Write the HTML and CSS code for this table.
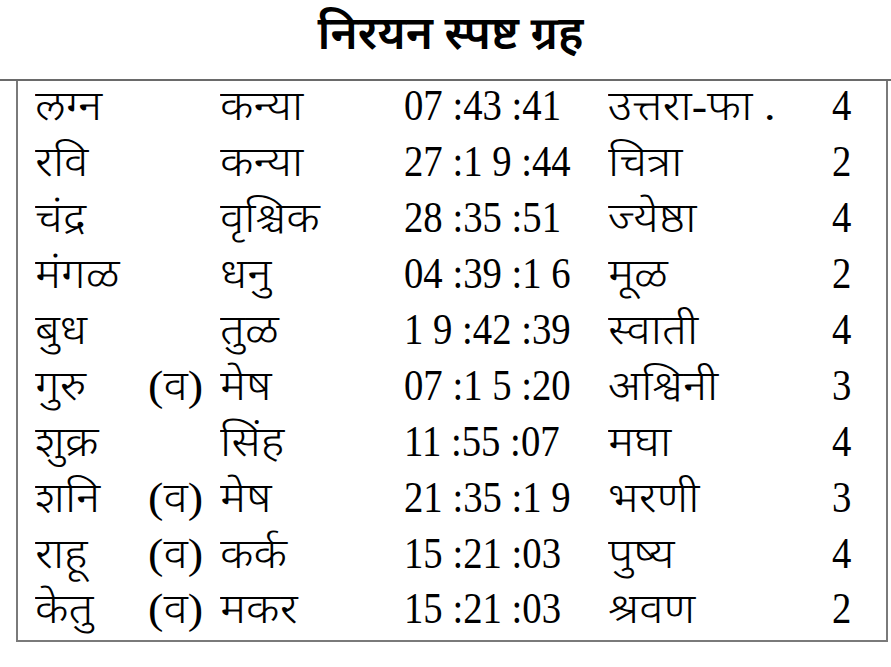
FILE: index.html
```html
<!DOCTYPE html>
<html lang="mr">
<head>
<meta charset="utf-8">
<link rel="stylesheet" href="styles.css">
<title>निरयन स्पष्ट ग्रह</title>
</head>
<body>
<h1 class="title">निरयन स्पष्ट ग्रह</h1>
<div class="frame">
  <div class="box">
    <div class="row"><span class="c"><span class="dv">लग्न</span></span><span class="c"></span><span class="c"><span class="dv">कन्या</span></span><span class="c num">07 :43 :41</span><span class="c"><span class="dv">उत्तरा-फा .</span></span><span class="c num">4</span></div>
    <div class="row"><span class="c"><span class="dv">रवि</span></span><span class="c"></span><span class="c"><span class="dv">कन्या</span></span><span class="c num">27 :1 9 :44</span><span class="c"><span class="dv">चित्रा</span></span><span class="c num">2</span></div>
    <div class="row"><span class="c"><span class="dv">चंद्र</span></span><span class="c"></span><span class="c"><span class="dv">वृश्चिक</span></span><span class="c num">28 :35 :51</span><span class="c"><span class="dv">ज्येष्ठा</span></span><span class="c num">4</span></div>
    <div class="row"><span class="c"><span class="dv">मंगळ</span></span><span class="c"></span><span class="c"><span class="dv">धनु</span></span><span class="c num">04 :39 :1 6</span><span class="c"><span class="dv">मूळ</span></span><span class="c num">2</span></div>
    <div class="row"><span class="c"><span class="dv">बुध</span></span><span class="c"></span><span class="c"><span class="dv">तुळ</span></span><span class="c num">1 9 :42 :39</span><span class="c"><span class="dv">स्वाती</span></span><span class="c num">4</span></div>
    <div class="row"><span class="c"><span class="dv">गुरु</span></span><span class="c"><span class="dv">(व)</span></span><span class="c"><span class="dv">मेष</span></span><span class="c num">07 :1 5 :20</span><span class="c"><span class="dv">अश्विनी</span></span><span class="c num">3</span></div>
    <div class="row"><span class="c"><span class="dv">शुक्र</span></span><span class="c"></span><span class="c"><span class="dv">सिंह</span></span><span class="c num">11 :55 :07</span><span class="c"><span class="dv">मघा</span></span><span class="c num">4</span></div>
    <div class="row"><span class="c"><span class="dv">शनि</span></span><span class="c"><span class="dv">(व)</span></span><span class="c"><span class="dv">मेष</span></span><span class="c num">21 :35 :1 9</span><span class="c"><span class="dv">भरणी</span></span><span class="c num">3</span></div>
    <div class="row"><span class="c"><span class="dv">राहू</span></span><span class="c"><span class="dv">(व)</span></span><span class="c"><span class="dv">कर्क</span></span><span class="c num">15 :21 :03</span><span class="c"><span class="dv">पुष्य</span></span><span class="c num">4</span></div>
    <div class="row"><span class="c"><span class="dv">केतु</span></span><span class="c"><span class="dv">(व)</span></span><span class="c"><span class="dv">मकर</span></span><span class="c num">15 :21 :03</span><span class="c"><span class="dv">श्रवण</span></span><span class="c num">2</span></div>
  </div>
</div>
</body>
</html>
```

FILE: styles.css
```css
html, body {
  margin: 0;
  padding: 0;
  background: #ffffff;
}
body {
  width: 891px;
  height: 667px;
  overflow: hidden;
  font-family: "Liberation Serif", "Noto Sans Devanagari", serif;
  color: #000;
}
.title {
  margin: 0;
  height: 79px;
  box-sizing: border-box;
  padding-top: 4px;
  padding-left: 10px;
  text-align: center;
  font-size: 46px;
  line-height: 60px;
  font-weight: 600;
}
.frame {
  border-top: 2px solid #6a6a6a;
}
.box {
  margin: 0 3px 0 16px;
  border-left: 2px solid #7a7a7a;
  border-right: 2px solid #7a7a7a;
  border-bottom: 2px solid #7a7a7a;
  height: 559px;
  padding: 0 0 0 17px;
  box-sizing: content-box;
}
.row {
  display: grid;
  grid-template-columns: 113px 72px 184px 204px 224px auto;
  height: 55.9px;
  box-sizing: border-box;
  padding-bottom: 5px;
  align-items: center;
}
.c {
  font-size: 42px;
  line-height: 50px;
  white-space: nowrap;
}
.dv {
  display: inline-block;
  font-weight: 300;
  transform: scaleX(1.1);
  transform-origin: left center;
}
.num {
  display: inline-block;
  font-size: 44px;
  transform: scaleX(0.88);
  transform-origin: left center;
}
```
